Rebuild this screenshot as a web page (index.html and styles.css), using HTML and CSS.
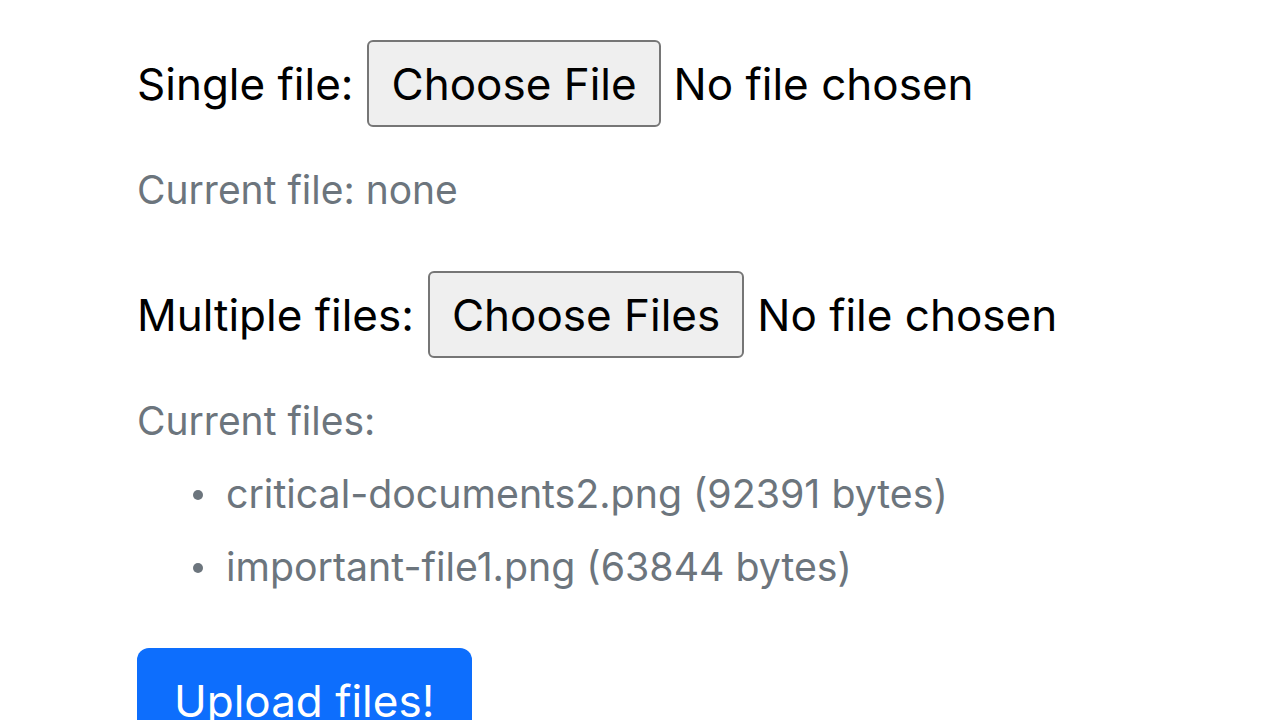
FILE: index.html
```html
<!DOCTYPE html>
<html lang="en">
<head>
<meta charset="utf-8">
<title>Upload</title>
<link rel="stylesheet" href="styles.css">
</head>
<body>
<form class="upload-form">
  <div class="field">
    <span class="label">Single file:</span>
    <button type="button" class="file-btn">Choose File</button>
    <span class="file-status">No file chosen</span>
  </div>
  <p class="help first-help">Current file: none</p>

  <div class="field field-multi">
    <span class="label">Multiple files:</span>
    <button type="button" class="file-btn">Choose Files</button>
    <span class="file-status">No file chosen</span>
  </div>
  <p class="help second-help">Current files:</p>
  <ul class="file-list">
    <li>critical-documents2.png (92391 bytes)</li>
    <li>important-file1.png (63844 bytes)</li>
  </ul>

  <button type="submit" class="submit-btn">Upload files!</button>
</form>
</body>
</html>
```
FILE: styles.css
```css
html, body {
  margin: 0;
  padding: 0;
  background: #ffffff;
}

body {
  font-family: Inter, "Noto Sans", "Liberation Sans", sans-serif;
  color: #000000;
  overflow: hidden;
}

.upload-form {
  padding-left: 137px;
  padding-top: 40px;
}

.field {
  display: flex;
  align-items: center;
  gap: 14px;
  height: 87px;
  font-size: 44px;
}

.file-status {
  margin-left: -1px;
}

.file-btn {
  box-sizing: border-box;
  height: 87px;
  padding: 0 22px;
  font-family: inherit;
  font-size: 44px;
  color: #000000;
  background: #efefef;
  border: 2px solid #767676;
  border-radius: 6px;
}

.help {
  margin: 0;
  font-size: 39px;
  line-height: 50px;
  color: #6c757d;
}

.first-help {
  margin-top: 38px;
}

.field-multi {
  margin-top: 56px;
}

.second-help {
  margin-top: 38px;
}

.file-list {
  margin: 11px 0 0 0;
  padding-left: 56px;
  list-style: none;
  font-size: 39.3px;
  line-height: 73px;
  color: #6c757d;
}

.file-list li {
  display: flex;
  align-items: center;
}

.file-list li::before {
  content: "";
  flex: none;
  width: 10px;
  height: 10px;
  margin-right: 23px;
  margin-top: 2px;
  border-radius: 50%;
  background: #6c757d;
}

.submit-btn {
  margin-top: 45px;
  box-sizing: border-box;
  width: 335px;
  padding: 26px 0 20px 37px;
  text-align: left;
  font-family: inherit;
  font-size: 44px;
  line-height: 54px;
  color: #ffffff;
  background: #0d6efd;
  border: 0;
  border-radius: 12px;
}
```
